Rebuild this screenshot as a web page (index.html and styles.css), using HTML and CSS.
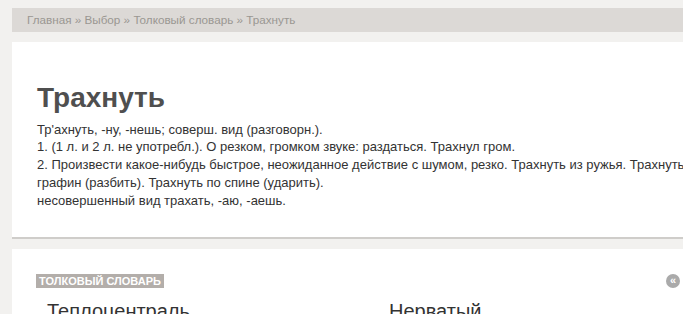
FILE: index.html
```html
<!DOCTYPE html>
<html lang="ru">
<head>
    <meta charset="UTF-8">
    <meta name="viewport" content="width=device-width, initial-scale=1.0">
    <title>Трахнуть — Толковый словарь</title>
    <link rel="stylesheet" href="styles.css">
</head>
<body>
    <div class="page">
        <div class="breadcrumbs">
            <a href="#">Главная</a> » <a href="#">Выбор</a> » <a href="#">Толковый словарь</a> » <span>Трахнуть</span>
        </div>

        <div class="card word-card">
            <h1>Трахнуть</h1>
            <div class="definition">
                Тр'ахнуть, -ну, -нешь; соверш. вид (разговорн.).<br>
                1. (1 л. и 2 л. не употребл.). О резком, громком звуке: раздаться. Трахнул гром.<br>
                2. Произвести какое-нибудь быстрое, неожиданное действие с шумом, резко. Трахнуть из ружья. Трахнуть графин (разбить). Трахнуть по спине (ударить).<br>
                несовершенный вид трахать, -аю, -аешь.
            </div>
        </div>

        <div class="card related-card">
            <div class="related-head">
                <span class="badge">Толковый словарь</span>
                <span class="nav-circle">«</span>
            </div>
            <div class="related-list">
                <div class="related-item">Теплоцентраль</div>
                <div class="related-item">Нерватый</div>
            </div>
        </div>
    </div>
</body>
</html>
```

FILE: styles.css
```css
body {
    font-family: Arial, "Liberation Sans", sans-serif;
    margin: 0;
    padding: 0;
    background-color: #f2f1ef;
    overflow: hidden;
}

.page {
    width: 780px;
    padding: 8px 0 0 12px;
}

.breadcrumbs {
    height: 24px;
    line-height: 24px;
    padding-left: 15px;
    background-color: #dcd9d6;
    color: #9a9792;
    font-size: 11.7px;
}
.breadcrumbs a {
    color: #9a9792;
    text-decoration: none;
}

.card {
    background-color: #fff;
    margin-top: 10px;
}

.word-card {
    padding: 39px 80px 28px 25px;
    border-bottom: 2px solid #cfcdca;
}
.word-card h1 {
    margin: 0 0 6px;
    font-size: 28px;
    line-height: 1.2;
    color: #4f4f4f;
}
.definition {
    font-size: 13px;
    line-height: 17.75px;
    color: #333;
}

.related-card {
    padding: 25px 0 0 24px;
    height: 60px;
}
.related-head {
    display: flex;
    align-items: center;
    justify-content: space-between;
    width: 644px;
}
.badge {
    display: inline-block;
    background-color: #b3aeaa;
    color: #fff;
    font-size: 11px;
    font-weight: bold;
    text-transform: uppercase;
    line-height: 14px;
    padding: 0 3px;
}
.nav-circle {
    width: 14px;
    height: 14px;
    border-radius: 50%;
    background-color: #aaa;
    color: #fff;
    font-size: 11px;
    line-height: 13px;
    text-align: center;
    font-weight: bold;
}

.related-list {
    display: grid;
    grid-template-columns: 342px 342px;
    padding: 12px 0 0 11px;
}
.related-item {
    font-size: 20px;
    color: #333;
}
```
